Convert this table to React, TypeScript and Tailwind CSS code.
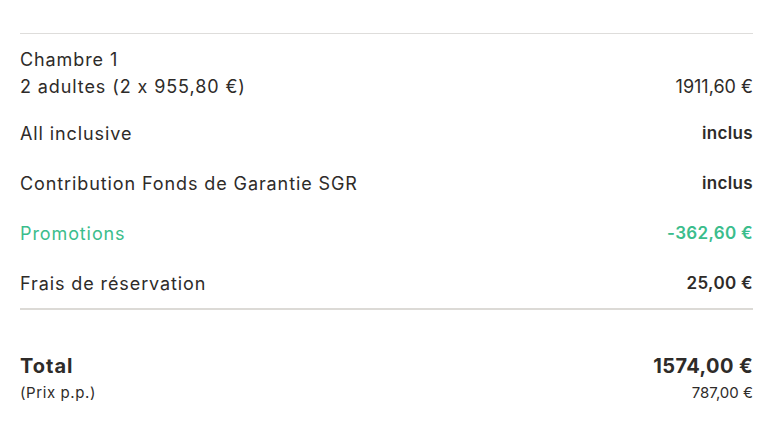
import React from 'react';

type Line = {
  label: string;
  value: string;
  bold?: boolean;
  green?: boolean;
};

const lines: Line[] = [
  { label: 'All inclusive', value: 'inclus', bold: true },
  { label: 'Contribution Fonds de Garantie SGR', value: 'inclus', bold: true },
  { label: 'Promotions', value: '-362,60 €', bold: true, green: true },
  { label: 'Frais de réservation', value: '25,00 €', bold: true },
];

function PriceRow({ label, value, bold, green }: Line) {
  return (
    <div
      className={`flex items-center justify-between text-[18px] leading-[27px] ${
        green ? 'text-[#3bbd8c]' : 'text-[#2e2b29]'
      }`}
    >
      <span className="tracking-[0.05em]">{label}</span>
      <span className={bold ? 'font-semibold text-[17px] tracking-[0.02em]' : ''}>{value}</span>
    </div>
  );
}

export default function App() {
  return (
    <div
      className="min-h-[438px] bg-white pt-[33px] text-[#2e2b29] [font-feature-settings:'calt'_0]"
      style={{ fontFamily: 'Inter, "Open Sans", sans-serif' }}
    >
      <div className="ml-5 w-[733px]">
        {/* Room details */}
        <div className="border-t border-[#dedddb] pt-[12px]">
          <div className="text-[18px] leading-[27px] tracking-[0.05em]">Chambre 1</div>
          <div className="flex items-center justify-between text-[18px] leading-[27px]">
            <span className="tracking-[0.05em]">2 adultes (2 x 955,80 €)</span>
            <span>1911,60 €</span>
          </div>
        </div>

        {/* Extras */}
        <div className="mt-[20px] flex flex-col gap-[23px]">
          {lines.map((line) => (
            <PriceRow key={line.label} {...line} />
          ))}
        </div>

        <div className="mt-[11px] border-t-2 border-[#dcdad6]" />

        {/* Total */}
        <div className="mt-[41px]">
          <div className="flex items-center justify-between text-[20px] font-bold leading-[30px]">
            <span className="tracking-[0.05em]">Total</span>
            <span className="tracking-[0.02em]">1574,00 €</span>
          </div>
          <div className="mt-[2px] flex items-center justify-between text-[15px] leading-[20px]">
            <span className="tracking-[0.04em]">(Prix p.p.)</span>
            <span>787,00 €</span>
          </div>
        </div>
      </div>
    </div>
  );
}
